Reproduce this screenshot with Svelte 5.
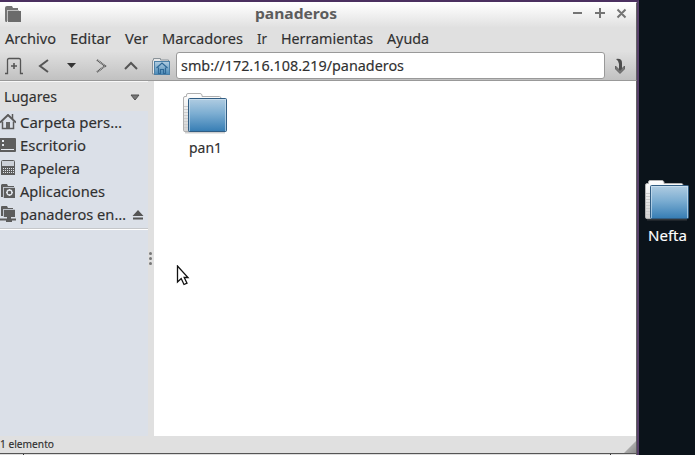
<script>
  const menus = [['Archivo', 51], ['Editar', 41], ['Ver', 23], ['Marcadores', 81], ['Ir', 10], ['Herramientas', 92], ['Ayuda', 42]];
  const places = [
    { label: 'Carpeta pers…', width: 102, icon: 'home' },
    { label: 'Escritorio', width: 66, icon: 'desktop' },
    { label: 'Papelera', width: 60, icon: 'trash' },
    { label: 'Aplicaciones', width: 85, icon: 'apps' },
    { label: 'panaderos en…', width: 106, icon: 'network' }
  ];
</script>

{#snippet label(text, width, kind = '')}
  <svg class="label {kind}" {width} height="20"><text x="0" y="15" textLength={width} lengthAdjust="spacingAndGlyphs">{text}</text></svg>
{/snippet}

{#snippet folder(id)}
  <svg class="folder" width="46" height="43" viewBox="0 0 46 43">
    <defs>
      <linearGradient id="front-{id}" x1="0" y1="0" x2="0" y2="1"><stop offset="0" stop-color="#b1cde2" /><stop offset=".45" stop-color="#7daed2" /><stop offset="1" stop-color="#367db4" /></linearGradient>
      <linearGradient id="back-{id}" x1="0" y1="0" x2="0" y2="1"><stop offset="0" stop-color="#fff" /><stop offset="1" stop-color="#d2d2d2" /></linearGradient>
    </defs>
    <path d="M3 40.5h40" stroke="#777" stroke-opacity=".35" stroke-width="2" />
    <path d="M1.500 38.500V6q0-1.500 1.500-1.500h1.500V3q0-1.500 1.500-1.500H18q1.500 0 2 1.500v1.500h17.500q1.500 0 1.500 2v33H3q-1.500 0-1.500-1Z" fill="url(#back-{id})" stroke="#b0b0b0" />
    <path d="M2 14.500h4m-4 3h4m-4 3h4m-4 3h4m-4 3h4m-4 3h4m-4 3h4m-4 3h4" stroke="#cdcdcd" />
    <rect x="6.500" y="6.500" width="38" height="33" rx="1" fill="url(#front-{id})" stroke="#315d83" />
    <path d="M7.500 39V7.500H43.500V39" fill="none" stroke="#d7e8f4" stroke-opacity=".6" />
  </svg>
{/snippet}

{#snippet placeIcon(name)}
  <svg class="place-icon" width="16" height="16" viewBox="0 0 16 16" fill="none" stroke="#5b5b5b">
    {#if name === 'home'}
      <path d="M0 8.500 8 1l8 7.500" stroke-width="2" /><path d="M2.500 7.500v7h11v-7M12.500 0v5" stroke-width="1.500" /><path d="M6 8h4v6H6z" fill="#666" stroke="none" />
    {:else if name === 'desktop'}
      <rect x="-2" y="1" width="18" height="14" rx="1" fill="#5d5d5d" stroke="none" /><path d="M2 3h2v2H2zM2 7h2v2H2zM1 12h13v1H1z" fill="#e5e9ef" stroke="none" />
    {:else if name === 'trash'}
      <path d="M1.500 6V1.500q0-1 1-1h11q1 0 1 1V6" fill="#cdd1d8" /><path d="M1 6h14v9H1z" fill="#5d5d5d" stroke="none" /><path d="M3 8.500h11M3 10.500h11M3 12.500h11" stroke="#e0e4ea" stroke-dasharray="1 1" />
    {:else if name === 'apps'}
      <path d="M2 1h5l1 2h6v1H3v10H1V2z" fill="#5d5d5d" stroke="none" /><path d="M4 5h11v10H4z" fill="#5d5d5d" stroke="none" /><path d="M3.500 15V4.500H15" stroke="#b5bac2" stroke-width=".8" /><circle cx="9.500" cy="9.500" r="2.500" stroke="#e2e6ec" stroke-width="1.300" /><path d="M9.500 6v1.500m0 4V13M6 9.500h1.500m4 0H13" stroke="#e2e6ec" />
    {:else}
      <path d="M1 10V1q0-1 1-1h5l1 2h5v1H3v7z" fill="#5d5d5d" stroke="none" /><path d="M4 4h11v7H4z" fill="#5d5d5d" stroke="none" /><path d="M3.500 11V3.500H15" stroke="#b5bac2" stroke-width=".8" /><path d="M7 11h4v3H7z" fill="#5d5d5d" stroke="none" /><path d="M0 13.500h16" stroke-width="2" /><path d="M6 14h6v2H6z" fill="#5d5d5d" stroke="none" />
    {/if}
  </svg>
{/snippet}

<main>
  <section class="window">
    <header class="title">
      <svg class="app-icon" width="17" height="17" viewBox="0 0 17 17"><path d="M1 14V2q0-2 2-2h5l1 2h5v2H3v12H2q-1 0-1-2Z" fill="#747474" /><path d="M5 5h12v11H4V5z" fill="#6b6b6b" /><path d="M3.500 15V4.500H15" fill="none" stroke="#b9b9b9" stroke-width=".9" /></svg>
      <div class="heading">{@render label('panaderos', 82, 'bold')}</div>
      <svg class="controls" width="56" height="14" viewBox="0 0 56 14" stroke="#747474" stroke-width="2" fill="none"><path d="M1 7h9M23 7h10M28 2v10M45.500 3.500l8 8m0-8-8 8" /></svg>
    </header>
    <nav class="menu">
      {#each menus as [text, width]}{@render label(text, width)}{/each}
    </nav>
    <div class="toolbar">
      <svg class="tools" width="176" height="29" viewBox="0 0 176 29" fill="none" stroke="#555">
        <defs><linearGradient id="home-blue" x1="0" y1="0" x2="0" y2="1"><stop stop-color="#b3cee1" /><stop offset="1" stop-color="#4a8ab8" /></linearGradient></defs>
        <path d="M5 21.500h2.500V8q0-1.500 1.500-1.500h10q1.500 0 1.500 1.500v13.500H23" stroke-width="1.300" /><path d="M14 11v6m-3-3h6" stroke-width="1.600" />
        <path d="m48 8-8 6 8 6" stroke-width="2" />
        <path d="M67 11h9l-4.500 5Z" fill="#333" stroke="none" />
        <path d="m97 8 8 6-8 6" stroke="#555" stroke-width="2" stroke-dasharray="1 .6" />
        <path d="m125 17 6-6 6 6" stroke-width="2" />
        <path d="M152.500 22V9q0-1 1-1V6.500h7V8h8v14z" fill="#e8e8e8" stroke="#8a9298" />
        <rect x="154.500" y="9.500" width="15" height="13" fill="url(#home-blue)" stroke="#4b7fa6" />
        <path d="m156.500 16 5.500-5 5.500 5M158.500 15.500v6h2v-4h3v4h2v-6" stroke="#2f6896" stroke-width="1.200" />
      </svg>
      <div class="address">{@render label('smb://172.16.108.219/panaderos', 223)}</div>
      <svg class="go" width="31" height="28" viewBox="0 0 31 28"><path d="M11 7q6-1 6 4v8h-3v-7q0-3-3-5Z" fill="#4c4c4c" /><path d="m10.500 14 4.500 4.500L19.500 14v3L15 21.500 10.500 17Z" fill="#777" stroke="#555" stroke-width=".8" /></svg>
    </div>
    <div class="body">
      <aside>
        <div class="places-head">{@render label('Lugares', 53)}<svg class="drop" width="10" height="7" viewBox="0 0 10 7"><path d="M1 1h8L5 6Z" fill="#777" stroke="#505050" /></svg></div>
        <div class="places">
          {#each places as place}
            <div class="place">
              {@render placeIcon(place.icon)}
              {@render label(place.label, place.width)}
              {#if place.icon === 'network'}<svg class="eject" width="12" height="10" viewBox="0 0 12 10"><path d="m6 0 5.500 6H.500zM1 7.500h10V9.500H1z" fill="#555" /></svg>{/if}
            </div>
          {/each}
          <div class="rule"></div>
        </div>
      </aside>
      <div class="split"><i></i><i></i><i></i></div>
      <div class="files"><div class="item">{@render folder('pan')}{@render label('pan1', 33)}</div></div>
    </div>
    <footer>{@render label('1 elemento', 54, 'small')}<svg class="grip" width="12" height="12"><defs><linearGradient id="grip" x1="0" y1="0" x2="1" y2="1"><stop stop-color="#c9c9c9" /><stop offset="1" stop-color="#8d8d8d" /></linearGradient></defs><path d="M0 12 12 0v12Z" fill="url(#grip)" /></svg></footer>
    <div class="bottom"><i></i><i></i></div>
  </section>
  <section class="desktop"><div class="item">{@render folder('nefta')}{@render label('Nefta', 39, 'light')}</div></section>
  <svg class="cursor" width="15" height="22" viewBox="0 0 15 22"><path d="M1.500 1v16l3.700-3.500 2.800 6 3-1.400-2.800-5.600H12Z" fill="#fff" stroke="#111" stroke-width="1.300" /></svg>
</main>

<style>
  :global(body) { margin: 0; }
  * { box-sizing: border-box; }
  svg { display: block; flex: none; }
  main { position: relative; width: 695px; height: 455px; display: flex; overflow: hidden; background: #0b131a; }
  .label { overflow: visible; fill: #303030; stroke: #303030; stroke-width: .15px; font: 15px "Noto Sans", "Open Sans", sans-serif; }
  .bold { fill: #5c5c5c; stroke: none; font-weight: 700; }
  .small { font-size: 11px; }
  .light { fill: #fff; stroke: #fff; }
  .window { width: 639px; height: 455px; display: flex; flex-direction: column; border-top: 2px solid #4b3060; border-right: 2px solid #58406a; background: #e0e0e0; }
  .window > * { border-right: 1px solid #626064; }
  .title { height: 25px; display: flex; background: linear-gradient(#fff, #e1e1e1); border-top: 1px solid #fff; }
  .app-icon { margin: 3px 0 0 4px; }
  .heading { margin: 1px 0 0 234px; }
  .controls { margin: 3px 0 0 235px; }
  .menu { height: 25px; display: flex; gap: 14px; padding: 2px 0 0 5px; }
  .toolbar { height: 29px; display: flex; background: linear-gradient(#dfdfdf, #c1c1c1); border-bottom: 1px solid #999; }
  .address { width: 429px; height: 27px; padding: 3px 4px; background: #fff; border: 1px solid #999; border-radius: 3px; }
  .body { height: 355px; display: flex; }
  aside { width: 148px; display: flex; flex-direction: column; background: #dbe0e8; }
  .places-head { height: 30px; display: flex; padding: 5px 8px 0 4px; justify-content: space-between; background: #e0e0e0; border-top: 1px solid #f8f8f8; }
  .drop { margin-top: 7px; }
  .place { height: 23px; display: flex; gap: 4px; padding-top: 2px; }
  .place-icon { margin-top: 1px; }
  .eject { margin: 5px 0 0 2px; }
  .rule { margin-top: 2px; height: 2px; background: #fff; border-top: 1px solid #c5c7ca; }
  .split { width: 6px; display: flex; flex-direction: column; align-items: flex-start; justify-content: center; gap: 2px; padding-left: 1px; background: #e0e0e0; }
  .split i { width: 3px; height: 3px; background: #777; border-radius: 50%; }
  .files { flex: 1; background: #fff; padding: 11px 0 0 28px; }
  .item { width: 46px; display: flex; flex-direction: column; align-items: center; gap: 3px; }
  footer { height: 17px; display: flex; justify-content: space-between; align-items: flex-end; background: #e0e0e0; }
  .bottom { height: 2px; display: flex; justify-content: space-between; padding: 0 25px 0 23px; background: #ddd; border-top: 1px solid #555; }
  .bottom i { width: 1px; height: 1px; background: #333; }
  .desktop { width: 56px; padding: 179px 0 0 5px; }
  .desktop .item { gap: 4px; }
  .cursor { position: absolute; left: 176px; top: 265px; }
</style>
